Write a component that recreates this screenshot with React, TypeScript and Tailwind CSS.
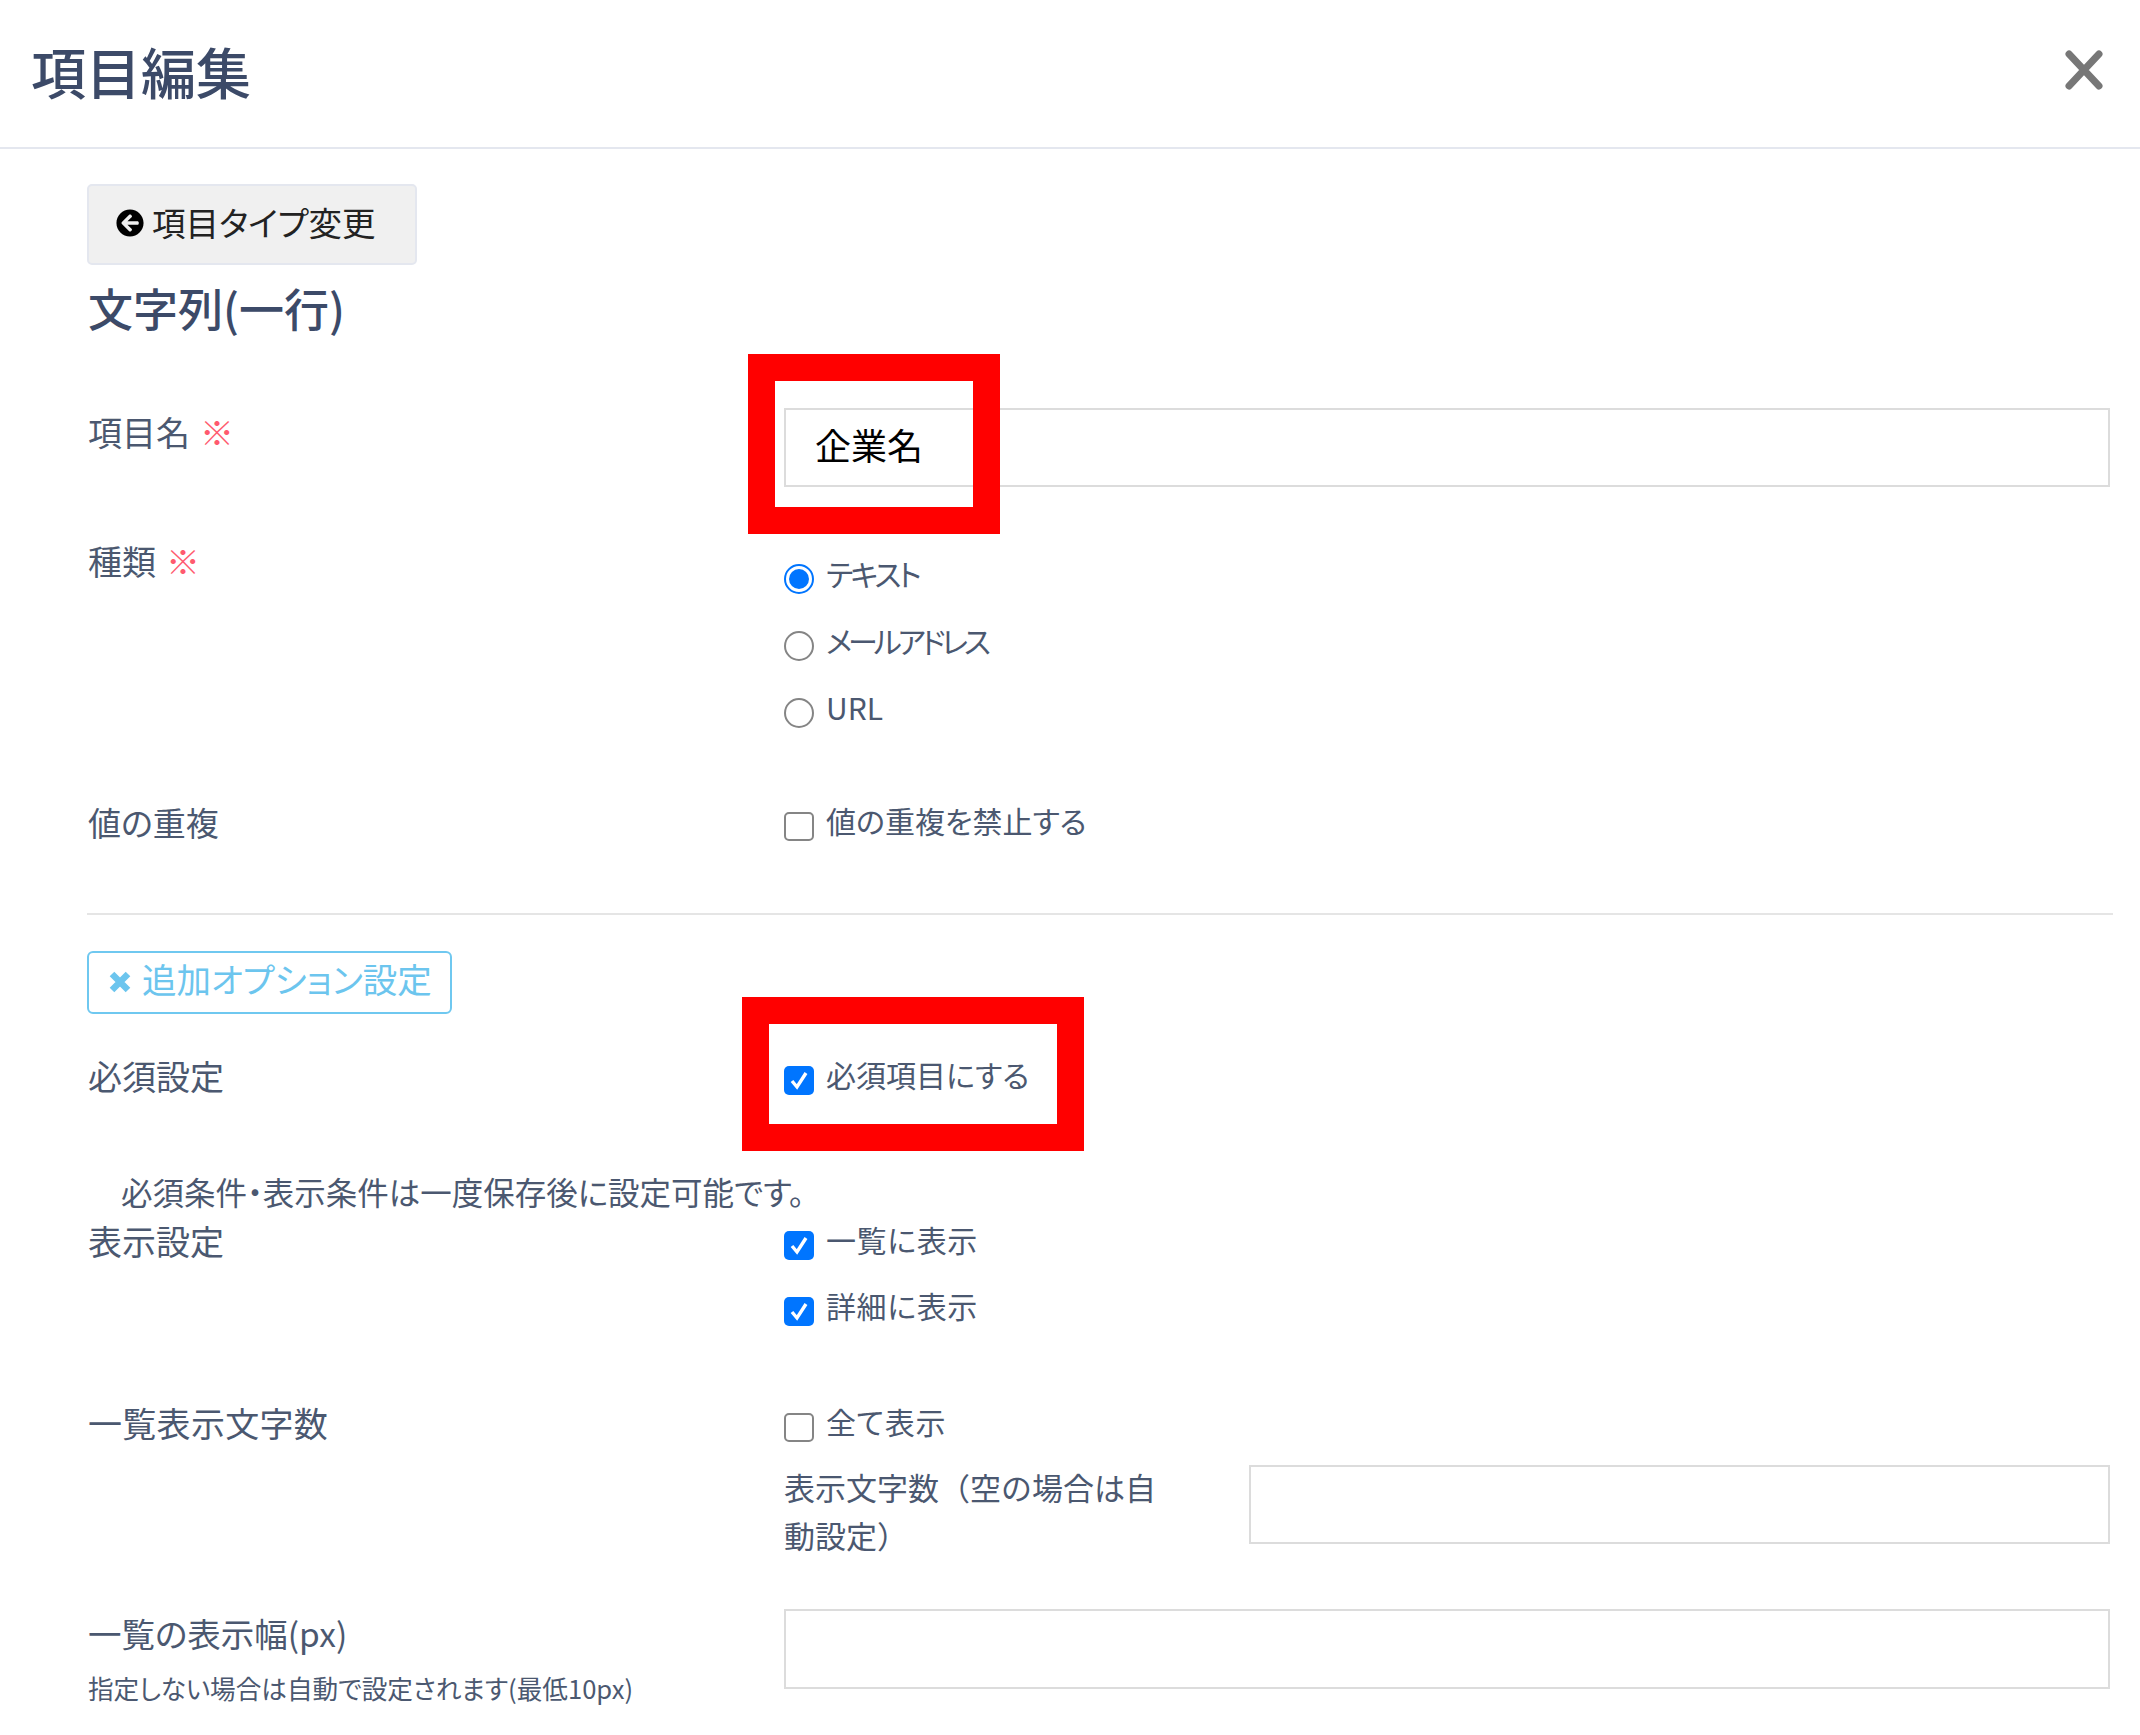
import React from 'react'
import { FaArrowCircleLeft } from 'react-icons/fa'

const FONT = "font-['Noto_Sans_CJK_JP','Noto_Sans',sans-serif]"

function Check({ checked, label, textClass = '' }: { checked?: boolean; label: string; textClass?: string }) {
  return (
    <label className="flex h-[48px] items-center">
      <span
        className={`mt-[4px] flex h-[29px] w-[30px] flex-shrink-0 items-center justify-center rounded-[5px] ${
          checked ? 'bg-[#0075ff]' : 'border-2 border-[#858585] bg-white'
        }`}
      >
        {checked && (
          <svg viewBox="0 0 24 24" className="h-[24px] w-[24px]" fill="none" stroke="#fff" strokeWidth="3.4">
            <path d="M5 13l5 6L19 5" />
          </svg>
        )}
      </span>
      <span className={`mb-[8px] ml-[12px] text-[30px] [font-feature-settings:'palt'] ${textClass}`}>{label}</span>
    </label>
  )
}

function Radio({ checked, label, textClass = '' }: { checked?: boolean; label: string; textClass?: string }) {
  return (
    <label className="flex h-[48px] items-center">
      <span
        className={`mt-[4px] flex h-[30px] w-[30px] flex-shrink-0 items-center justify-center rounded-full border-2 bg-white ${
          checked ? 'border-[#0075ff]' : 'border-[#858585]'
        }`}
      >
        {checked && <span className="h-[20px] w-[20px] rounded-full bg-[#0075ff]" />}
      </span>
      <span className={`mb-[8px] ml-[12px] text-[30px] [font-feature-settings:'palt'] ${textClass}`}>{label}</span>
    </label>
  )
}

function Label({ children, className = '' }: { children: React.ReactNode; className?: string }) {
  return <div className={`h-[48px] leading-[44px] [font-feature-settings:'palt'] ${className || 'text-[34px]'}`}>{children}</div>
}

function Req() {
  return <span className="ml-[10px] text-[#ff5a6e]">※</span>
}

export default function App() {
  return (
    <div className={`${FONT} min-h-[1735px] w-[2140px] overflow-hidden bg-white text-[#4b5870]`}>
      {/* header */}
      <div className="flex h-[149px] items-start justify-between border-b-2 border-[#e4e7ef] pl-[31px] pr-[37px]">
        <h1 className="mt-[34px] text-[55px] font-medium leading-[72px] text-[#3c4a68]">項目編集</h1>
        <svg viewBox="0 0 38 40" className="mt-[50px] h-[40px] w-[38px]" fill="none" stroke="#777" strokeWidth="7" strokeLinecap="round">
          <path d="M4 4l30 32M34 4L4 36" />
        </svg>
      </div>

      <div className="pl-[88px] pr-[27px]">
        <button className="-ml-px mt-[35px] flex h-[81px] w-[330px] items-center rounded-[5px] border-2 border-[#e4e7ef] bg-[#f0f0f0] pl-[27px] text-[#222]">
          <FaArrowCircleLeft className="mb-[4px] h-[28px] w-[28px] text-black" />
          <span className="mb-[4px] ml-[8px] text-[33.5px] [font-feature-settings:'palt']">項目タイプ変更</span>
        </button>
        <h2 className="mt-[13px] text-[45px] font-medium leading-[60px] text-[#3c4a68]">文字列(一行)</h2>

        {/* 項目名 */}
        <div className="mt-[70px] grid grid-cols-[696px_1fr]">
          <Label className="box-content pt-[2px] text-[34px]">項目名<Req /></Label>
          <div className="relative mr-[3px]">
            <input
              defaultValue="企業名"
              className="h-[79px] w-full border-2 border-[#dcdcdc] bg-white pb-[8px] pl-[29px] text-[36px] text-black outline-none"
            />
            <div className="pointer-events-none absolute left-[-36px] top-[-54px] h-[180px] w-[252px] border-[27px] border-[#ff0000]" />
          </div>
        </div>

        {/* 種類 */}
        <div className="mt-[51px] grid grid-cols-[696px_1fr]">
          <Label className="box-content pt-[1px] text-[34px]">種類<Req /></Label>
          <div className="flex flex-col gap-[19px] pt-[15px]">
            <Radio checked label="テキスト" textClass="tracking-[-3px]" />
            <Radio label="メールアドレス" textClass="tracking-[-4px]" />
            <Radio label="URL" />
          </div>
        </div>

        {/* 値の重複 */}
        <div className="mt-[65px] grid grid-cols-[696px_1fr]">
          <Label className="text-[33px]">値の重複</Label>
          <Check label="値の重複を禁止する" />
        </div>

        <div className="-ml-px mt-[65px] h-[2px] bg-[#e5e5e5]" />

        <button className="-ml-px mt-[36px] flex h-[63px] w-[365px] items-center rounded-[6px] border-2 border-[#6fc8f0] bg-white pl-[20px] text-[#6cc5ee]">
          <svg viewBox="0 0 22 24" className="mb-[1px] h-[24px] w-[22px]" fill="none" stroke="currentColor" strokeWidth="6.5">
            <path d="M3 4l16 16M19 4L3 20" />
          </svg>
          <span className="mb-[7px] ml-[11px] text-[34.5px] [font-feature-settings:'palt']">追加オプション設定</span>
        </button>

        {/* 必須設定 */}
        <div className="mt-[40px] grid grid-cols-[696px_1fr]">
          <Label>必須設定</Label>
          <div className="relative">
            <Check checked label="必須項目にする" />
            <div className="pointer-events-none absolute left-[-42px] top-[-57px] h-[154px] w-[342px] border-[27px] border-[#ff0000]" />
          </div>
        </div>

        <p className="mt-[67px] h-[48px] pl-[33px] text-[31.5px] leading-[44px] [font-feature-settings:'palt']">必須条件・表示条件は一度保存後に設定可能です。</p>

        {/* 表示設定 */}
        <div className="mt-[2px] grid grid-cols-[696px_1fr]">
          <Label>表示設定</Label>
          <div className="flex flex-col gap-[18px]">
            <Check checked label="一覧に表示" textClass="tracking-[0.6px]" />
            <Check checked label="詳細に表示" textClass="tracking-[0.6px]" />
          </div>
        </div>

        {/* 一覧表示文字数 */}
        <div className="mt-[68px] grid grid-cols-[696px_1fr]">
          <Label className="text-[34px] tracking-[0.3px]">一覧表示文字数</Label>
          <div className="mr-[3px]">
            <Check label="全て表示" textClass="tracking-[0.6px]" />
            <div className="mt-[16px] grid grid-cols-[465px_1fr]">
              <div className="-mt-[2px] pr-[70px] text-[31px] leading-[48px]">表示文字数（空の場合は自動設定）</div>
              <input className="h-[79px] w-full border-2 border-[#dcdcdc] bg-white outline-none" />
            </div>
          </div>
        </div>

        {/* 一覧の表示幅 */}
        <div className="mt-[50px] grid grid-cols-[696px_1fr]">
          <div>
            <Label className="box-content pt-[2px] text-[33.5px]">一覧の表示幅(px)</Label>
            <div className="mt-[13px] text-[25.6px] leading-[32px] [font-feature-settings:'palt']">指定しない場合は自動で設定されます(最低10px)</div>
          </div>
          <div className="mr-[3px]">
            <input className="h-[80px] w-full border-2 border-[#dcdcdc] bg-white outline-none" />
          </div>
        </div>
      </div>
    </div>
  )
}
